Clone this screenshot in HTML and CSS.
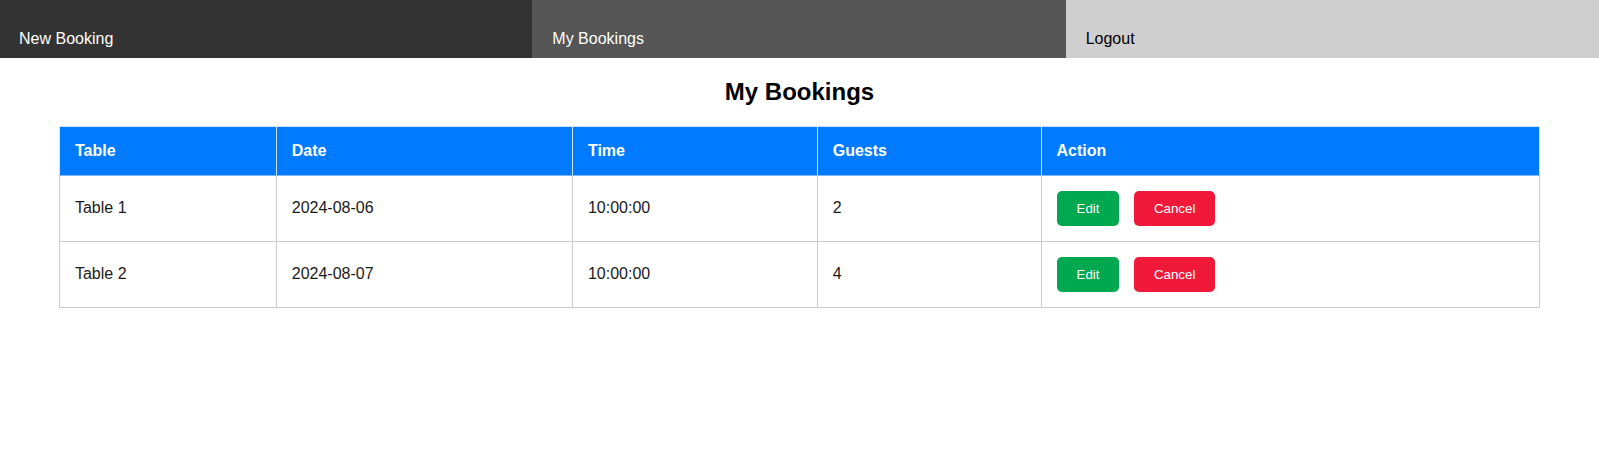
FILE: index.html
```html
<!DOCTYPE html>
<html lang="en">
<head>
<meta charset="utf-8">
<title>My Bookings</title>
<link rel="stylesheet" href="styles.css">
</head>
<body>
<nav class="nav">
  <a class="nav-item nav-new" href="#">New Booking</a>
  <a class="nav-item nav-mine" href="#">My Bookings</a>
  <a class="nav-item nav-logout" href="#">Logout</a>
</nav>
<main class="content">
  <h2 class="title">My Bookings</h2>
  <table class="bookings">
    <thead>
      <tr><th>Table</th><th>Date</th><th>Time</th><th>Guests</th><th>Action</th></tr>
    </thead>
    <tbody>
      <tr>
        <td>Table 1</td><td>2024-08-06</td><td>10:00:00</td><td>2</td>
        <td><button class="btn btn-edit">Edit</button> <button class="btn btn-cancel">Cancel</button></td>
      </tr>
      <tr>
        <td>Table 2</td><td>2024-08-07</td><td>10:00:00</td><td>4</td>
        <td><button class="btn btn-edit">Edit</button> <button class="btn btn-cancel">Cancel</button></td>
      </tr>
    </tbody>
  </table>
</main>
</body>
</html>
```
FILE: styles.css
```css
html, body {
  margin: 0;
  padding: 0;
  background: #fff;
  font-family: "Liberation Sans", Arial, sans-serif;
}

.nav {
  display: flex;
  height: 58px;
}

.nav-item {
  flex: 1 1 0;
  padding: 30px 20px 10px 20px;
  font-size: 16px;
  line-height: 18px;
  text-decoration: none;
}

.nav-new {
  background: #333333;
  color: #ffffff;
  padding-left: 19px;
}

.nav-mine {
  background: #555555;
  color: #ffffff;
}

.nav-logout {
  background: #cfcfcf;
  color: #000000;
}

.content {
  padding: 0 20px;
}

.title {
  text-align: center;
  font-size: 24px;
  font-weight: bold;
  color: #000;
  margin: 20px 0;
}

.bookings {
  width: 95%;
  margin: 0 auto;
  border-collapse: collapse;
  font-size: 16px;
  color: #1a1a1a;
}

.bookings th,
.bookings td {
  border: 1px solid #cccccc;
  padding: 15px;
  text-align: left;
}

.bookings td {
  padding: 14px 15px 16px 15px;
}

.bookings td.cell-action,
.bookings td:last-child {
  padding: 15px;
}

.bookings th {
  background: #007bff;
  color: #ffffff;
  font-weight: bold;
  border-color: #cfe3ff;
  border-bottom-color: #7fb8ff;
}

.btn {
  font-family: "Liberation Sans", Arial, sans-serif;
  font-size: 13.333px;
  color: #ffffff;
  border: none;
  border-radius: 5px;
  padding: 10px 20px;
  margin-right: 10px;
  cursor: pointer;
}

.btn:last-child {
  margin-right: 0;
}

.btn-edit {
  background: #00a84f;
}

.btn-cancel {
  background: #f0193a;
}
```
